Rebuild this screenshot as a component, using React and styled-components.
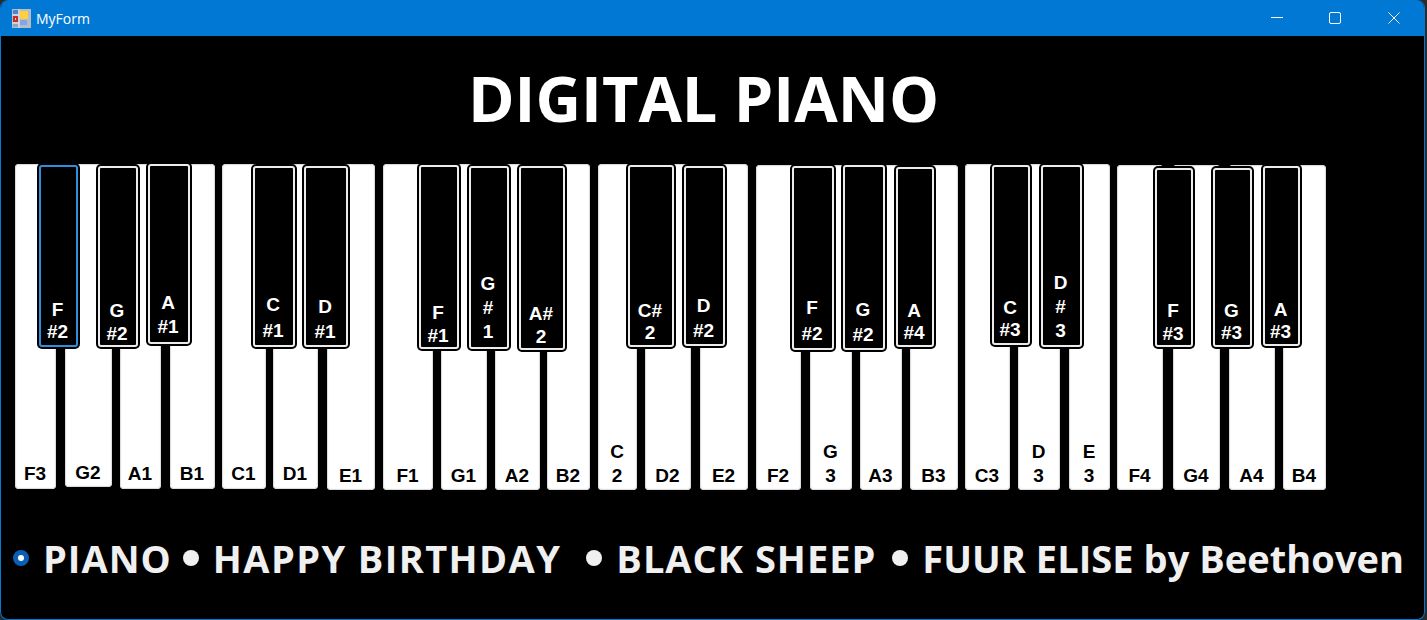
import React from "react";
import styled, { createGlobalStyle } from "styled-components";

const GlobalStyle = createGlobalStyle`
  html, body { margin: 0; padding: 0; background: #2b2b2b; overflow: hidden; }
`;

const Window = styled.div`
  width: 1425px;
  height: 620px;
  box-sizing: border-box;
  display: flex;
  flex-direction: column;
  background: #000;
  border: solid #0078d4;
  border-width: 0 1px 1px 1px;
  border-radius: 8px;
  overflow: hidden;
`;

const TitleBar = styled.header`
  height: 36px;
  flex: none;
  display: flex;
  align-items: center;
  padding-left: 11px;
  background: #0078d4;
  color: #fff;
  font: 400 14px "Open Sans", "Noto Sans", sans-serif;
`;

const TitleText = styled.span`
  margin-left: 5px;
`;

const Controls = styled.div`
  margin-left: auto;
  display: flex;
  padding-right: 1px;
`;

const ControlButton = styled.div`
  width: 58.5px;
  height: 34px;
  display: flex;
  align-items: center;
  justify-content: center;
  align-self: flex-start;
`;

const Heading = styled.h1`
  margin: 22px 0 0;
  padding-right: 18px;
  height: 80px;
  text-align: center;
  color: #fff;
  font: 700 63px/80px "Open Sans", "Noto Sans", sans-serif;
`;

const Keyboard = styled.div`
  position: relative;
  margin-top: 26px;
  height: 326px;
  display: flex;
  align-items: flex-start;
  padding-left: 14px;
`;

const WhiteKey = styled.div`
  flex: none;
  box-sizing: border-box;
  width: ${(p) => p.$width}px;
  height: ${(p) => p.$height}px;
  margin-top: ${(p) => p.$offset}px;
  margin-left: ${(p) => p.$gap}px;
  display: flex;
  flex-direction: column;
  justify-content: flex-end;
  align-items: center;
  padding-right: 1px;
  padding-bottom: ${(p) => p.$pad}px;
  background: #fff;
  border-radius: 4px;
  box-shadow: inset 0 0 1px 1px #d8d8d8;
  color: #000;
  font: 700 19px/24px "Liberation Sans", Arial, sans-serif;
`;

const BlackKey = styled.div`
  position: absolute;
  box-sizing: border-box;
  left: ${(p) => p.$left}px;
  top: ${(p) => p.$top}px;
  width: ${(p) => p.$width}px;
  height: ${(p) => p.$height}px;
  display: flex;
  flex-direction: column;
  justify-content: flex-end;
  align-items: center;
  padding-right: 2px;
  padding-bottom: ${(p) => p.$pad}px;
  background: #000;
  border: 2px solid ${(p) => (p.$focused ? "#2f8fdc" : "#ececec")};
  border-radius: 3px;
  box-shadow: 0 0 0 2px #000;
  color: #fff;
  font-family: "Liberation Sans", Arial, sans-serif;
  font-weight: 700;
  font-size: 19px;
  line-height: ${(p) => p.$lineHeight}px;
`;

const KeyLine = styled.span`
  display: block;
  white-space: nowrap;
`;

const RadioRow = styled.div`
  display: flex;
  align-items: center;
  margin-top: 45px;
  padding-left: 12px;
  color: #f0f0f0;
  font: 700 38px/46px "Open Sans", "Noto Sans", sans-serif;
`;

const RadioItem = styled.div`
  flex: none;
  display: flex;
  align-items: center;
  margin-left: ${(p) => p.$gap}px;
`;

const RadioDot = styled.span`
  flex: none;
  box-sizing: border-box;
  width: 16px;
  height: 16px;
  margin-right: 14px;
  border-radius: 50%;
  background: ${(p) => (p.$checked ? "#fff" : "#f0f0f0")};
  border: ${(p) => (p.$checked ? "5px solid #0a5fb4" : "0")};
`;

const RadioLabel = styled.span`
  display: inline-block;
  white-space: nowrap;
  letter-spacing: ${(p) => p.$spacing}px;
`;

const TOP = 164;

/* label, x0, x1, top, bottom, bottom padding */
const whites = [
  ["F3", 15, 56, 164, 489, 3], ["G2", 65, 112, 164, 487, 2], ["A1", 120, 161, 164, 489, 3], ["B1", 170, 215, 164, 489, 3],
  ["C1", 222, 266, 164, 489, 3], ["D1", 273, 318, 164, 489, 3], ["E1", 327, 375, 164, 490, 2], ["F1", 383, 433, 164, 490, 2],
  ["G1", 441, 487, 164, 490, 2], ["A2", 495, 540, 164, 490, 2], ["B2", 547, 590, 164, 490, 2], ["C|2", 598, 637, 164, 490, 2],
  ["D2", 645, 691, 164, 490, 2], ["E2", 700, 748, 164, 490, 2], ["F2", 756, 801, 165, 490, 2], ["G|3", 810, 852, 165, 490, 2],
  ["A3", 860, 902, 165, 490, 2], ["B3", 910, 958, 165, 490, 2], ["C3", 965, 1010, 164, 490, 2], ["D|3", 1018, 1060, 164, 490, 2],
  ["E|3", 1069, 1110, 164, 490, 2], ["F4", 1117, 1163, 165, 490, 2], ["G4", 1173, 1220, 165, 490, 2], ["A4", 1229, 1275, 165, 490, 2],
  ["B4", 1283, 1326, 165, 490, 2],
];

/* label, x0, y0, x1, y1, centre of last line, line height, focused */
const blacks = [
  ["F|#2", 39, 165, 78, 347, 332, 22, true], ["G|#2", 98, 166, 138, 347, 333, 23], ["A|#1", 148, 164, 190, 344, 327, 24],
  ["C|#1", 253, 166, 295, 347, 331, 26], ["D|#1", 304, 166, 348, 347, 331, 25], ["F|#1", 419, 165, 459, 349, 335, 23],
  ["G|#|1", 469, 166, 509, 349, 332, 24], ["A#|2", 519, 166, 565, 350, 336, 23], ["C#|2", 628, 165, 674, 347, 333, 22],
  ["D|#2", 684, 166, 725, 346, 330, 25], ["F|#2", 792, 166, 834, 350, 334, 26], ["G|#2", 843, 165, 885, 350, 334, 25],
  ["A|#4", 896, 167, 934, 347, 333, 22], ["C|#3", 992, 165, 1030, 345, 330, 22], ["D|#|3", 1041, 165, 1082, 347, 331, 24],
  ["F|#3", 1155, 168, 1193, 347, 333, 23], ["G|#3", 1213, 168, 1252, 347, 333, 22], ["A|#3", 1263, 166, 1300, 346, 332, 22],
];

const songs = [
  { label: "PIANO", checked: true, gap: 0, spacing: 1 },
  { label: "HAPPY BIRTHDAY", gap: 11, spacing: 1.4 },
  { label: "BLACK SHEEP", gap: 25, spacing: 1 },
  { label: "FUUR ELISE by Beethoven", gap: 16, spacing: 0.05 },
];

const Lines = ({ text }) =>
  text.split("|").map((line, i) => <KeyLine key={i}>{line}</KeyLine>);

const AppIcon = () => (
  <svg width="19" height="19" viewBox="0 0 19 19">
    <rect x="0" y="0" width="19" height="19" fill="#b4bcc6" />
    <rect x="1" y="1" width="5" height="4" fill="#4a86d0" />
    <rect x="1" y="7" width="5" height="6" fill="#c62f2a" />
    <rect x="3" y="9" width="1" height="2" fill="#f4d0a0" />
    <rect x="1" y="15" width="5" height="3" fill="#8fa6c8" />
    <rect x="8" y="2" width="8" height="8" fill="#ffcf40" />
    <rect x="8" y="11" width="7" height="5" fill="#7fa8e8" />
    <path d="M7 0v19M0 6h7M0 14h7" stroke="#e4e8ec" />
  </svg>
);

export default function App() {
  return (
    <>
      <GlobalStyle />
      <Window>
        <TitleBar>
          <AppIcon />
          <TitleText>MyForm</TitleText>
          <Controls>
            <ControlButton>
              <svg width="12" height="12" viewBox="0 0 12 12"><path d="M0 5.5h12" stroke="#fff" /></svg>
            </ControlButton>
            <ControlButton>
              <svg width="12" height="12" viewBox="0 0 12 12"><rect x="0.5" y="0.5" width="11" height="11" rx="1.5" fill="none" stroke="#fff" /></svg>
            </ControlButton>
            <ControlButton>
              <svg width="12" height="12" viewBox="0 0 12 12"><path d="M0.5 0.5l11 11M11.5 0.5l-11 11" stroke="#fff" /></svg>
            </ControlButton>
          </Controls>
        </TitleBar>
        <Heading>DIGITAL PIANO</Heading>
        <Keyboard>
          {whites.map(([label, x0, x1, y0, y1, pad], i) => (
            <WhiteKey
              key={i}
              $width={x1 - x0}
              $height={y1 - y0}
              $offset={y0 - TOP}
              $gap={i === 0 ? 0 : x0 - whites[i - 1][2]}
              $pad={pad}
            >
              <Lines text={label} />
            </WhiteKey>
          ))}
          {blacks.map(([label, x0, y0, x1, y1, center, lineHeight, focused], i) => (
            <BlackKey
              key={i}
              $left={x0 - 1}
              $top={y0 - TOP}
              $width={x1 - x0}
              $height={y1 - y0}
              $pad={Math.max(0, y1 - 2 - center - lineHeight / 2)}
              $lineHeight={lineHeight}
              $focused={focused}
            >
              <Lines text={label} />
            </BlackKey>
          ))}
        </Keyboard>
        <RadioRow>
          {songs.map((song) => (
            <RadioItem key={song.label} $gap={song.gap}>
              <RadioDot $checked={song.checked} />
              <RadioLabel $spacing={song.spacing}>{song.label}</RadioLabel>
            </RadioItem>
          ))}
        </RadioRow>
      </Window>
    </>
  );
}
